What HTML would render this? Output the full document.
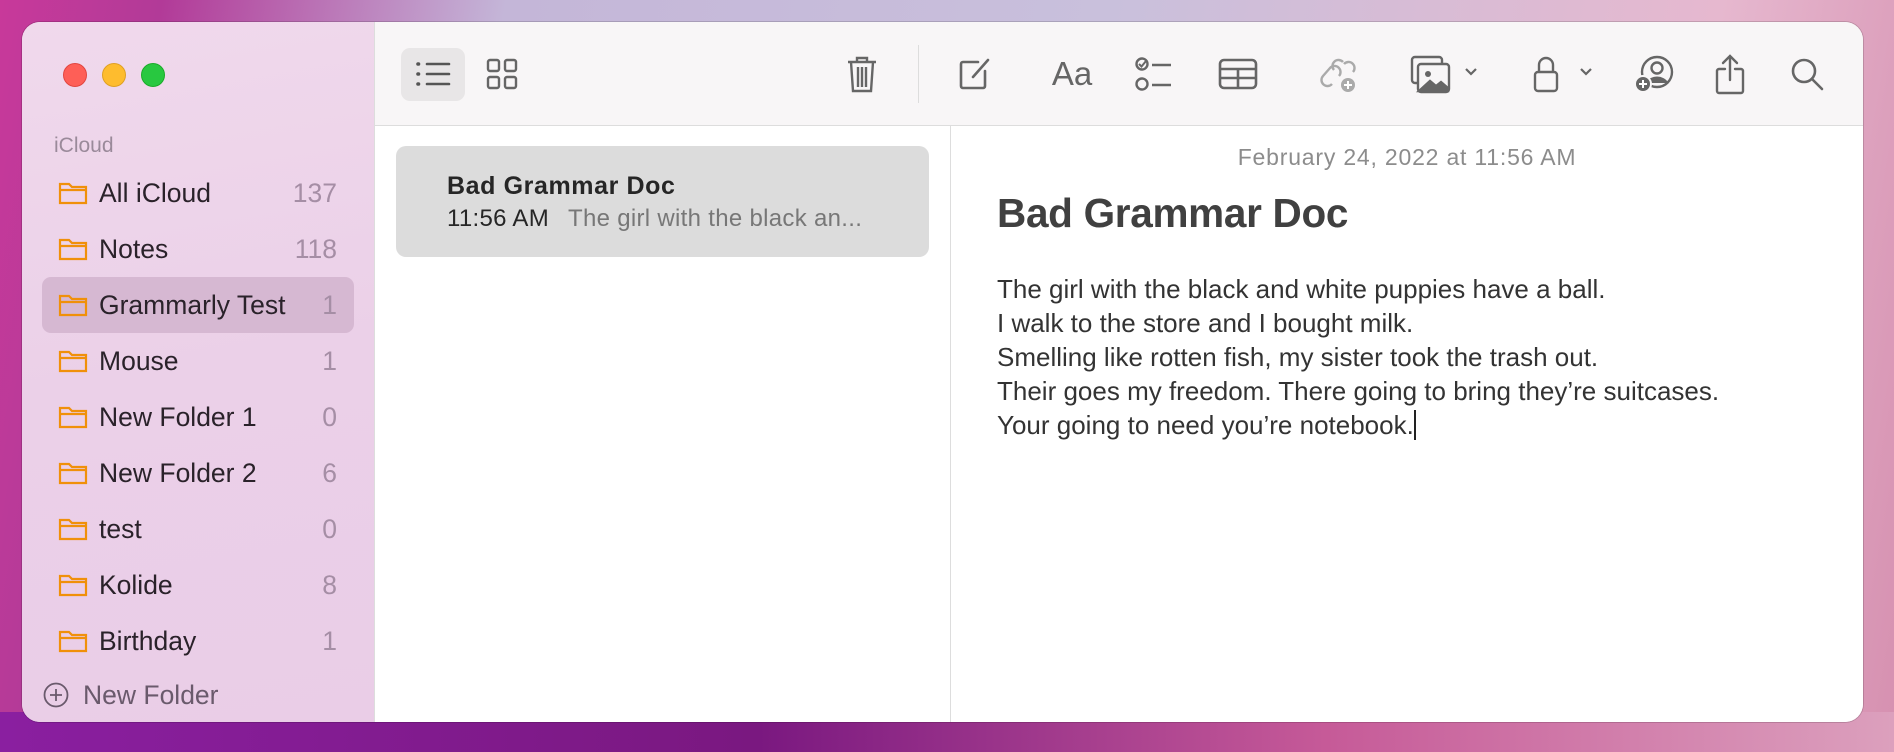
<!DOCTYPE html>
<html><head><meta charset="utf-8"><style>
*{margin:0;padding:0;box-sizing:border-box}
body{width:1894px;height:752px;overflow:hidden;font-family:"Liberation Sans",sans-serif;
background:linear-gradient(100deg,#c8399a 0%,#b23a98 8%,#c4b6d8 25%,#c9c0dc 55%,#e6b8cf 85%,#d690b0 100%);position:relative}
.bot{position:absolute;left:0;right:0;bottom:0;height:40px;background:linear-gradient(90deg,#8a1fa0,#7a1880 40%,#c65a98 70%,#dca0bd)}
.win{position:absolute;left:22px;top:22px;width:1841px;height:700px;border-radius:18px;overflow:hidden;background:#fff;box-shadow:0 0 0 1px rgba(0,0,0,.15)}
.side{position:absolute;left:0;top:0;width:353px;height:700px;background:linear-gradient(170deg,#f0d9ec,#ebd0e8 50%,#eacde7);border-right:1px solid #ddd}
.dot{position:absolute;top:41px;width:24px;height:24px;border-radius:50%}
.sec{position:absolute;left:32px;top:112px;font-size:21px;color:#9a8a9a}
.row{position:absolute;left:20px;width:312px;height:56px;border-radius:9px;font-size:26.5px;color:#2a222a}
.row.sel{background:#d6b8d2}
.row svg{position:absolute;left:16px;top:16px}
.row .t{position:absolute;left:57px;top:13px}
.row .c{position:absolute;right:17px;top:13px;color:#a58ea5}
.nf{position:absolute;left:21px;top:658px;font-size:26.5px;color:#6a5a6c}
.tb{position:absolute;left:353px;top:0;right:0;height:104px;background:#f8f6f7;border-bottom:1px solid #ddd}
.ic{position:absolute;top:52px;transform:translate(-50%,-50%)}
.list{position:absolute;left:353px;top:104px;width:576px;bottom:0;border-right:1px solid #ddd;background:#fff}
.card{position:absolute;left:21px;top:20px;width:533px;height:111px;border-radius:10px;background:#dcdcdc}
.ed{position:absolute;left:929px;top:104px;right:0;bottom:0;background:#fff}
</style></head><body>
<div class="bot"></div>
<div class="win">
 <div class="side">
  <div class="dot" style="left:41px;background:#fe5f57;border:1px solid #e14640"></div>
  <div class="dot" style="left:80px;background:#febc2e;border:1px solid #dfa023"></div>
  <div class="dot" style="left:119px;background:#28c840;border:1px solid #1aab29"></div>
  <div class="sec">iCloud</div>
  <div class="row" style="top:143px"><svg width="30" height="24" viewBox="0 0 30 24"><path d="M2 3h9l3 3h14v16H2z M2 9h26" fill="none" stroke="#f0900a" stroke-width="2.2"/></svg><span class="t">All iCloud</span><span class="c">137</span></div>
  <div class="row" style="top:199px"><svg width="30" height="24" viewBox="0 0 30 24"><path d="M2 3h9l3 3h14v16H2z M2 9h26" fill="none" stroke="#f0900a" stroke-width="2.2"/></svg><span class="t">Notes</span><span class="c">118</span></div>
  <div class="row sel" style="top:255px"><svg width="30" height="24" viewBox="0 0 30 24"><path d="M2 3h9l3 3h14v16H2z M2 9h26" fill="none" stroke="#f0900a" stroke-width="2.2"/></svg><span class="t">Grammarly Test</span><span class="c">1</span></div>
  <div class="row" style="top:311px"><svg width="30" height="24" viewBox="0 0 30 24"><path d="M2 3h9l3 3h14v16H2z M2 9h26" fill="none" stroke="#f0900a" stroke-width="2.2"/></svg><span class="t">Mouse</span><span class="c">1</span></div>
  <div class="row" style="top:367px"><svg width="30" height="24" viewBox="0 0 30 24"><path d="M2 3h9l3 3h14v16H2z M2 9h26" fill="none" stroke="#f0900a" stroke-width="2.2"/></svg><span class="t">New Folder 1</span><span class="c">0</span></div>
  <div class="row" style="top:423px"><svg width="30" height="24" viewBox="0 0 30 24"><path d="M2 3h9l3 3h14v16H2z M2 9h26" fill="none" stroke="#f0900a" stroke-width="2.2"/></svg><span class="t">New Folder 2</span><span class="c">6</span></div>
  <div class="row" style="top:479px"><svg width="30" height="24" viewBox="0 0 30 24"><path d="M2 3h9l3 3h14v16H2z M2 9h26" fill="none" stroke="#f0900a" stroke-width="2.2"/></svg><span class="t">test</span><span class="c">0</span></div>
  <div class="row" style="top:535px"><svg width="30" height="24" viewBox="0 0 30 24"><path d="M2 3h9l3 3h14v16H2z M2 9h26" fill="none" stroke="#f0900a" stroke-width="2.2"/></svg><span class="t">Kolide</span><span class="c">8</span></div>
  <div class="row" style="top:591px"><svg width="30" height="24" viewBox="0 0 30 24"><path d="M2 3h9l3 3h14v16H2z M2 9h26" fill="none" stroke="#f0900a" stroke-width="2.2"/></svg><span class="t">Birthday</span><span class="c">1</span></div>
  <div class="nf"><svg width="26" height="26" viewBox="0 0 26 26" style="vertical-align:-4px;margin-right:14px"><circle cx="13" cy="13" r="11.5" fill="none" stroke="#6a5a6c" stroke-width="1.8"/><path d="M13 7v12M7 13h12" stroke="#6a5a6c" stroke-width="1.8"/></svg>New Folder</div>
 </div>
 <div class="tb">
  <div style="position:absolute;left:26px;top:26px;width:64px;height:53px;border-radius:9px;background:#e8e6e7"></div>
  <svg class="ic" style="left:58px" width="36" height="28" viewBox="0 0 36 28" fill="none" stroke="#555" stroke-width="2.6" stroke-linecap="round"><path d="M12 4h22M12 14h22M12 24h22"/><path d="M3 4h.5M3 14h.5M3 24h.5" stroke-width="3.6"/></svg>
  <svg class="ic" style="left:127px" width="32" height="32" viewBox="0 0 32 32" fill="none" stroke="#666" stroke-width="2.4"><rect x="2" y="2" width="11" height="11" rx="2"/><rect x="19" y="2" width="11" height="11" rx="2"/><rect x="2" y="19" width="11" height="11" rx="2"/><rect x="19" y="19" width="11" height="11" rx="2"/></svg>
  <svg class="ic" style="left:487px" width="32" height="38" viewBox="0 0 32 38" fill="none" stroke="#666" stroke-width="2.4"><path d="M2 7h28M11 7V3h10v4M5 7l2 29h18l2-29M12 12v20M16 12v20M20 12v20"/></svg>
  <div style="position:absolute;left:543px;top:23px;width:1px;height:58px;background:#ddd"></div>
  <svg class="ic" style="left:600px" width="34" height="34" viewBox="0 0 34 34" fill="none" stroke="#666" stroke-width="2.6" stroke-linecap="round"><path d="M20 5H5a2 2 0 0 0-2 2v22a2 2 0 0 0 2 2h20a2 2 0 0 0 2-2V14"/><path d="M30 3L15 20"/></svg>
  <div class="ic" style="left:697px;font-size:33px;color:#666">Aa</div>
  <svg class="ic" style="left:779px" width="38" height="38" viewBox="0 0 38 38" fill="none" stroke="#666" stroke-width="2.4"><circle cx="7" cy="9" r="5.5"/><path d="M4 9l2.5 2.5L11 6" stroke-width="2"/><circle cx="7" cy="29" r="5.5"/><path d="M17 10h19M17 30h19"/></svg>
  <svg class="ic" style="left:863px" width="40" height="32" viewBox="0 0 40 32" fill="none" stroke="#666" stroke-width="2.6"><rect x="2" y="2" width="36" height="28" rx="4"/><path d="M2 11h36M2 20h36M20 11v19"/></svg>
  <svg class="ic" style="left:963px" width="40" height="40" viewBox="0 0 40 40" fill="none" stroke="#aaa" stroke-width="2.4"><path d="M14 30a6 6 0 0 1-9-8l7-8a6 6 0 0 1 9 8"/><path d="M26 10a6 6 0 0 1 9 8"/><path d="M16 16a6 6 0 0 1 9-8"/><circle cx="30" cy="31" r="7" fill="#aaa" stroke="none"/><path d="M30 27v8M26 31h8" stroke="#fff" stroke-width="2"/></svg>
  <svg class="ic" style="left:1056px" width="42" height="40" viewBox="0 0 42 40" fill="none" stroke="#666" stroke-width="2.4"><rect x="2" y="3" width="30" height="26" rx="3"/><rect x="8" y="10" width="31" height="28" rx="3" fill="#f8f6f7"/><circle cx="18" cy="20" r="3" fill="#666" stroke="none"/><path d="M9 37l11-10 6 5 5-4 7 6v3H9z" fill="#666"/></svg>
  <svg class="ic" style="left:1096px;top:50px" width="14" height="10" viewBox="0 0 14 10" fill="none" stroke="#666" stroke-width="2.2"><path d="M2 2l5 5 5-5"/></svg>
  <svg class="ic" style="left:1171px" width="26" height="38" viewBox="0 0 26 38" fill="none" stroke="#666" stroke-width="2.4"><path d="M6 17V10a7 7 0 0 1 14 0v7"/><rect x="2" y="17" width="22" height="19" rx="3"/></svg>
  <svg class="ic" style="left:1211px;top:50px" width="14" height="10" viewBox="0 0 14 10" fill="none" stroke="#666" stroke-width="2.2"><path d="M2 2l5 5 5-5"/></svg>
  <svg class="ic" style="left:1279px" width="42" height="40" viewBox="0 0 42 40" fill="none" stroke="#666" stroke-width="2.4"><circle cx="24" cy="18" r="15"/><circle cx="24" cy="14" r="5.5"/><path d="M14 29a11 9 0 0 1 20 0" fill="#666"/><circle cx="10" cy="30" r="8" fill="#666" stroke="#f8f6f7" stroke-width="2"/><path d="M10 26v8M6 30h8" stroke="#fff" stroke-width="2"/></svg>
  <svg class="ic" style="left:1355px" width="32" height="42" viewBox="0 0 32 42" fill="none" stroke="#666" stroke-width="2.4" stroke-linecap="round"><path d="M16 3v24M9 10l7-7 7 7"/><path d="M11 16H5a2 2 0 0 0-2 2v20a2 2 0 0 0 2 2h22a2 2 0 0 0 2-2V18a2 2 0 0 0-2-2h-6"/></svg>
  <svg class="ic" style="left:1432px" width="34" height="34" viewBox="0 0 34 34" fill="none" stroke="#666" stroke-width="2.6" stroke-linecap="round"><circle cx="14" cy="14" r="11"/><path d="M22 22l10 10"/></svg>
 </div>
 <div class="list">
  <div class="card">
   <div style="position:absolute;left:51px;top:26px;font-size:25px;font-weight:bold;color:#262626;letter-spacing:0.6px">Bad Grammar Doc</div>
   <div style="position:absolute;left:51px;top:59px;font-size:24px;color:#262626;letter-spacing:0.3px">11:56 AM <span style="color:#777;margin-left:12px">The girl with the black an...</span></div>
  </div>
 </div>
 <div class="ed">
  <div style="position:absolute;left:0;right:0;top:18px;text-align:center;font-size:23px;letter-spacing:0.8px;color:#8c8c8c">February 24, 2022 at 11:56 AM</div>
  <div style="position:absolute;left:46px;top:64px;font-size:40.5px;font-weight:bold;color:#404040;letter-spacing:-0.3px">Bad Grammar Doc</div>
  <div style="position:absolute;left:46px;top:146px;font-size:26px;line-height:34px;color:#333">The girl with the black and white puppies have a ball.<br>I walk to the store and I bought milk.<br>Smelling like rotten fish, my sister took the trash out.<br>Their goes my freedom. There going to bring they’re suitcases.<br>Your going to need you’re notebook.<span style="display:inline-block;width:2px;height:30px;background:#222;vertical-align:-6px"></span></div>
 </div>
</div>
</body></html>
